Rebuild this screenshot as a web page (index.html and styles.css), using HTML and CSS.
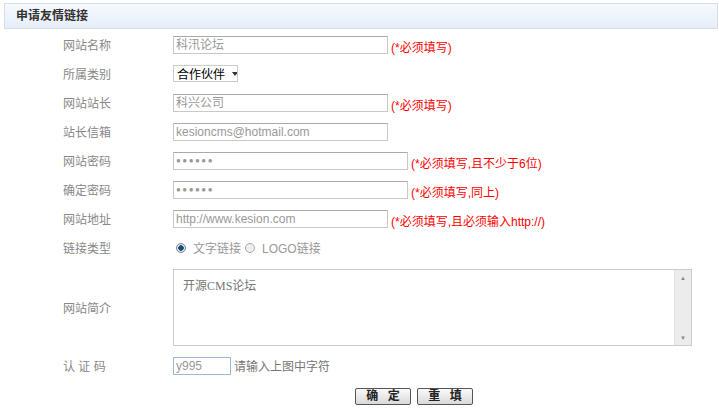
FILE: index.html
```html
<!DOCTYPE html>
<html lang="zh-CN">
<head>
    <meta charset="UTF-8">
    <title>申请友情链接</title>
    <link rel="stylesheet" href="styles.css">
</head>
<body>

    <div class="panel-title">申请友情链接</div>

    <form class="link-form">
        <div class="row">
            <span class="label">网站名称</span>
            <div class="field"><span class="text-box">科汛论坛</span><span class="tip">(*必须填写)</span></div>
        </div>
        <div class="row">
            <span class="label">所属类别</span>
            <div class="field"><span class="select-box">合作伙伴<i class="arrow"></i></span></div>
        </div>
        <div class="row">
            <span class="label">网站站长</span>
            <div class="field"><span class="text-box">科兴公司</span><span class="tip">(*必须填写)</span></div>
        </div>
        <div class="row">
            <span class="label">站长信箱</span>
            <div class="field"><span class="text-box">kesioncms@hotmail.com</span></div>
        </div>
        <div class="row">
            <span class="label">网站密码</span>
            <div class="field"><span class="text-box wide dots">●●●●●●</span><span class="tip">(*必须填写,且不少于6位)</span></div>
        </div>
        <div class="row">
            <span class="label">确定密码</span>
            <div class="field"><span class="text-box wide dots">●●●●●●</span><span class="tip">(*必须填写,同上)</span></div>
        </div>
        <div class="row">
            <span class="label">网站地址</span>
            <div class="field"><span class="text-box">http://www.kesion.com</span><span class="tip">(*必须填写,且必须输入http://)</span></div>
        </div>
        <div class="row">
            <span class="label">链接类型</span>
            <div class="field radios">
                <span class="radio checked"></span><span class="radio-text">文字链接</span>
                <span class="radio"></span><span class="radio-text">LOGO链接</span>
            </div>
        </div>
        <div class="row row-tall">
            <span class="label">网站简介</span>
            <div class="field">
                <div class="memo">
                    <div class="memo-text">开源CMS论坛</div>
                    <div class="scrollbar"><span class="up">▲</span><span class="down">▼</span></div>
                </div>
            </div>
        </div>
        <div class="row">
            <span class="label">认 证 码</span>
            <div class="field"><span class="text-box code">y995</span><span class="hint">请输入上图中字符</span></div>
        </div>
        <div class="actions">
            <button type="button">确 定</button>
            <button type="button">重 填</button>
        </div>
    </form>

</body>
</html>
```

FILE: styles.css
```css
* {
    margin: 0;
    padding: 0;
    box-sizing: border-box;
}

body {
    background: #fff;
    font-family: "Liberation Sans", "Noto Sans CJK SC", sans-serif;
    font-size: 12px;
    color: #666;
    padding: 3px 1px 0 4px;
}

.panel-title {
    height: 26px;
    line-height: 24px;
    padding-left: 11px;
    font-weight: bold;
    color: #333;
    background: linear-gradient(#f6f9fe, #e7eef9);
    border: 1px solid #d6dee9;
}

.link-form {
    padding-top: 1px;
}

.row {
    display: flex;
    align-items: center;
    height: 29px;
}

.row-tall {
    height: 89px;
    padding: 6px 0 5px;
}

.label {
    width: 169px;
    padding-left: 59px;
    color: #888;
}

.field {
    display: flex;
    align-items: center;
}

.text-box {
    display: block;
    width: 215px;
    height: 18px;
    line-height: 16px;
    padding-left: 2px;
    border: 1px solid #c8c8c8;
    border-top-color: #aaa;
    color: #999;
    white-space: nowrap;
    overflow: hidden;
}

.text-box.wide {
    width: 235px;
}

.dots {
    font-size: 8px;
    letter-spacing: 1.5px;
    color: #999;
}

.text-box.code {
    width: 58px;
    border-color: #9bb8d4;
}

.tip {
    color: #f00;
    margin-left: 3px;
    padding-top: 4px;
}

.hint {
    margin-left: 3px;
    color: #777;
}

.select-box {
    display: flex;
    align-items: center;
    width: 65px;
    height: 17px;
    padding-left: 3px;
    border: 1px solid #ccc;
    color: #000;
    white-space: nowrap;
    overflow: hidden;
}

.arrow {
    margin-left: 7px;
    border-left: 3px solid transparent;
    border-right: 3px solid transparent;
    border-top: 4px solid #333;
}

.radios {
    padding-left: 3px;
}

.radio {
    width: 10px;
    height: 10px;
    border-radius: 50%;
    border: 1px solid #aaa;
    background: #eee;
    margin-right: 7px;
}

.radio.checked {
    background: radial-gradient(circle, #1d4f6a 0 2.5px, #dde6ee 3px);
    border-color: #789;
}

.radio-text {
    margin-right: 4px;
    color: #999;
}

.memo {
    display: flex;
    width: 519px;
    height: 77px;
    border: 1px solid #ccc;
}

.memo-text {
    flex: 1;
    padding: 6px 0 0 9px;
    color: #777;
    font-family: "Liberation Serif", "Noto Sans CJK SC", serif;
}

.scrollbar {
    width: 17px;
    background: #ececec;
    border-left: 1px solid #e2e2e2;
    display: flex;
    flex-direction: column;
    justify-content: space-between;
    align-items: center;
    font-size: 6px;
    color: #888;
    padding: 5px 0 4px;
}

.actions {
    display: flex;
    gap: 6px;
    padding: 8px 0 0 351px;
}

button {
    width: 56px;
    height: 17px;
    line-height: 15px;
    padding: 0;
    font-family: inherit;
    font-size: 12px;
    font-weight: bold;
    letter-spacing: 3px;
    text-indent: 3px;
    color: #222;
    background: linear-gradient(#fafafa, #d9d9d9);
    border: 1px solid #555;
    border-radius: 2px;
}
```
